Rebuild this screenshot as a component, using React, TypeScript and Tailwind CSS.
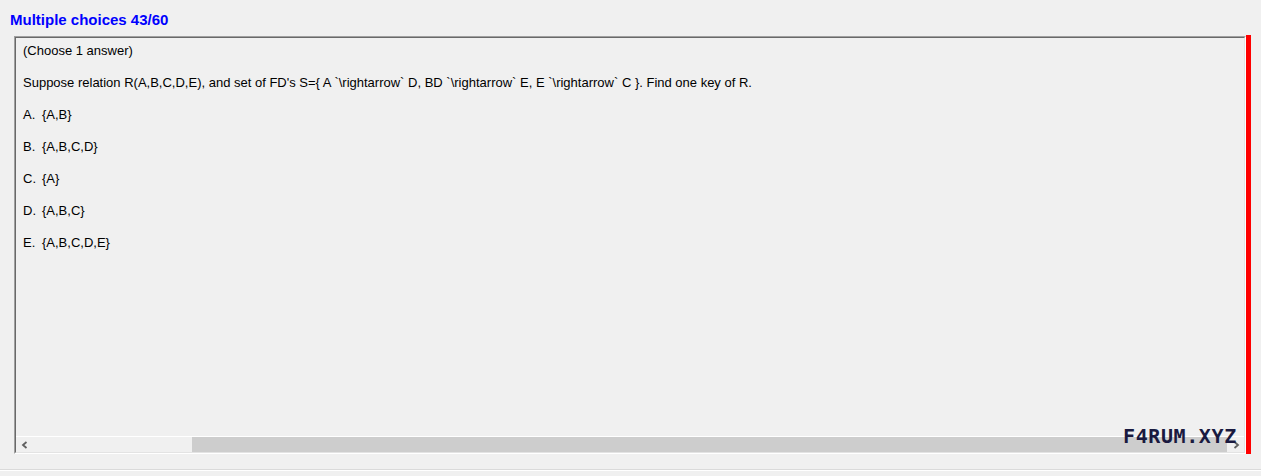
import React from 'react';

const options = [
  { label: 'A.', text: '{A,B}' },
  { label: 'B.', text: '{A,B,C,D}' },
  { label: 'C.', text: '{A}' },
  { label: 'D.', text: '{A,B,C}' },
  { label: 'E.', text: '{A,B,C,D,E}' },
];

const ChevronLeft = () => (
  <svg width="8" height="8" viewBox="0 0 8 8">
    <path d="M5.5 1 L2 4 L5.5 7" stroke="#606060" strokeWidth="1.8" fill="none" />
  </svg>
);

const ChevronRight = () => (
  <svg width="8" height="8" viewBox="0 0 8 8">
    <path d="M2.5 1 L6 4 L2.5 7" stroke="#606060" strokeWidth="1.8" fill="none" />
  </svg>
);

export default function App() {
  return (
    <div className="relative w-full h-[476px] bg-[#f0f0f0] overflow-hidden font-['Liberation_Sans',Arial,sans-serif] text-black">
      {/* header */}
      <div className="pl-[10px] pt-[11px] text-[15px] leading-[17px] font-bold text-[#0000ff]">
        Multiple choices 43/60
      </div>

      <div className="flex mt-[8px]">
        {/* question panel, sunken border */}
        <div className="ml-[14px] w-[1232px] h-[418px] border-t border-l border-[#a0a0a0] border-r border-b border-r-white border-b-white">
          <div className="w-full h-full flex flex-col border-t border-l border-[#696969] border-r border-b border-r-[#e3e3e3] border-b-[#e3e3e3]">
            <div className="flex-1 pl-[7px] pt-[5px] text-[13px] leading-[16px] flex flex-col gap-[16px]">
              <p>(Choose 1 answer)</p>
              <p className="whitespace-pre">
                {"Suppose relation R(A,B,C,D,E), and set of FD's S={ A `\\rightarrow` D, BD `\\rightarrow` E, E `\\rightarrow` C }. Find one key of R."}
              </p>
              {options.map(o => (
                <p key={o.label} className="flex">
                  <span className="inline-block w-[19px]">{o.label}</span>
                  <span>{o.text}</span>
                </p>
              ))}
            </div>

            {/* horizontal scrollbar */}
            <div className="h-[16px] border-t border-white flex bg-[#f0f0f0]">
              <div className="w-[17px] flex items-center justify-center">
                <ChevronLeft />
              </div>
              <div className="flex-1 flex">
                <div className="ml-[159px] w-[1035px] h-full bg-[#cdcdcd]" />
              </div>
              <div className="w-[16px] flex items-center justify-center">
                <ChevronRight />
              </div>
            </div>
          </div>
        </div>

        {/* red marker */}
        <div className="w-[5px] h-[419px] -mt-[1px] bg-[#ff0000]" />
      </div>

      {/* bottom separator */}
      <div className="mt-[15px] border-t border-[#dadada]" />
      <div className="border-t border-white" />

      {/* watermark */}
      <div className="absolute left-[1123px] top-[424px] text-[20px] leading-[24px] font-bold tracking-[0.6px] text-[#1a1a40] font-['DejaVu_Sans_Mono',monospace]">
        F4RUM.XYZ
      </div>
    </div>
  );
}
